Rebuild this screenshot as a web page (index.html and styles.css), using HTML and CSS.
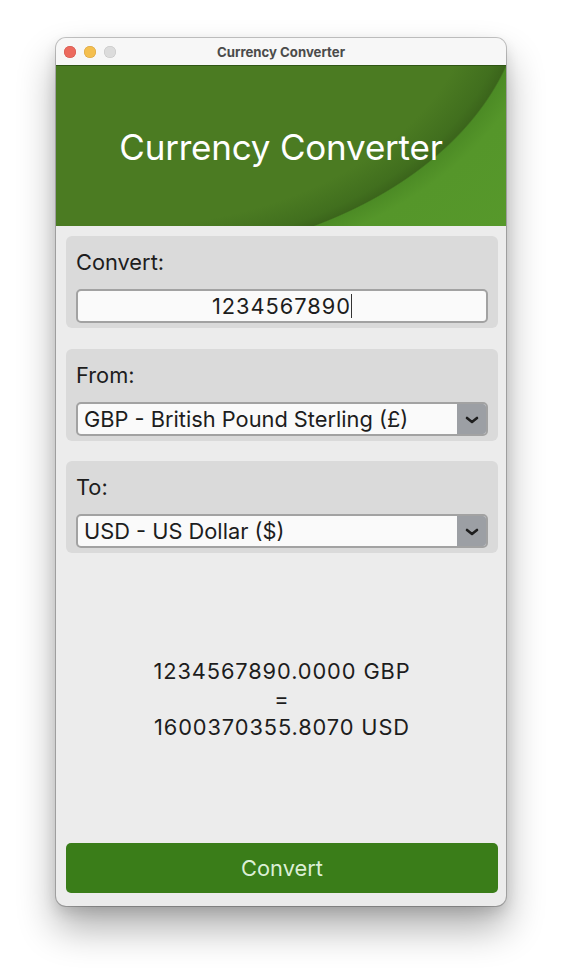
FILE: index.html
```html
<!DOCTYPE html>
<html lang="en">
<head>
<meta charset="utf-8">
<title>Currency Converter</title>
<link rel="stylesheet" href="styles.css">
</head>
<body>
<div class="window">
  <div class="titlebar">
    <div class="lights">
      <span class="light red"></span>
      <span class="light yellow"></span>
      <span class="light gray"></span>
    </div>
    <div class="wtitle">Currency Converter</div>
  </div>
  <div class="header">
    <h1 class="htitle">Currency Converter</h1>
  </div>
  <div class="content">
    <div class="group">
      <div class="label">Convert:</div>
      <div class="input"><span class="value">1234567890</span><span class="caret"></span></div>
    </div>
    <div class="group">
      <div class="label">From:</div>
      <div class="select">
        <span class="sel-text">GBP - British Pound Sterling (£)</span>
        <span class="sel-btn"><svg width="14" height="10" viewBox="0 0 14 10"><path d="M2 3 L7 7 L12 3" fill="none" stroke="#1e1e1e" stroke-width="2.6" stroke-linecap="round" stroke-linejoin="round"/></svg></span>
      </div>
    </div>
    <div class="group">
      <div class="label">To:</div>
      <div class="select">
        <span class="sel-text">USD - US Dollar ($)</span>
        <span class="sel-btn"><svg width="14" height="10" viewBox="0 0 14 10"><path d="M2 3 L7 7 L12 3" fill="none" stroke="#1e1e1e" stroke-width="2.6" stroke-linecap="round" stroke-linejoin="round"/></svg></span>
      </div>
    </div>
    <div class="result">
      <div>1234567890.0000 GBP</div>
      <div>=</div>
      <div>1600370355.8070 USD</div>
    </div>
    <button class="convert">Convert</button>
  </div>
</div>
</body>
</html>
```
FILE: styles.css
```css
* { box-sizing: border-box; }
html, body { margin: 0; padding: 0; }
body {
  background: #ffffff;
  width: 562px;
  height: 980px;
  font-family: Inter, "Liberation Sans", sans-serif;
  color: #1d1d1d;
  padding-top: 38px;
  padding-left: 56px;
}
.window {
  width: 450px;
  height: 868px;
  border-radius: 10px;
  overflow: hidden;
  display: flex;
  flex-direction: column;
  background: #ececec;
  box-shadow: 0 0 0 1px rgba(0,0,0,0.22), 0 22px 38px rgba(0,0,0,0.32), 0 6px 14px rgba(0,0,0,0.12);
}
.titlebar {
  height: 28px;
  flex: none;
  background: #f7f7f7;
  display: flex;
  align-items: center;
  position: relative;
  border-bottom: 1px solid #2f5514;
}
.lights {
  display: flex;
  gap: 8px;
  padding-left: 8px;
}
.light {
  width: 12px;
  height: 12px;
  border-radius: 50%;
}
.red { background: #ec6a5e; box-shadow: inset 0 0 0 0.5px #d0534a; }
.yellow { background: #f4bf4f; box-shadow: inset 0 0 0 0.5px #d6a13e; }
.gray { background: #dcdcdc; box-shadow: inset 0 0 0 0.5px #c4c4c4; }
.wtitle {
  position: absolute;
  left: 0; right: 0; top: 0; bottom: 0;
  display: flex;
  align-items: center;
  justify-content: center;
  font-size: 13.2px;
  font-weight: 700;
  color: #4b4b4b;
  pointer-events: none;
}
.header {
  height: 160px;
  flex: none;
  display: flex;
  align-items: center;
  justify-content: center;
  background:
    radial-gradient(ellipse 407px 274px at 60px -80px, #4b7b22 0%, #4b7b22 88%, #416f1e 97%, #3b651b 100%, #4c8b25 100.4%, #55962a 106%, #57992b 140%);
}
.htitle {
  margin: 0;
  font-weight: 400;
  font-size: 35px;
  color: #ffffff;
  letter-spacing: -0.2px;
  padding-top: 2px;
}
.content {
  flex: 1;
  display: flex;
  flex-direction: column;
  padding: 10px 8px 13px 10px;
}
.group {
  background: #dadada;
  border-radius: 6px;
  height: 92px;
  padding: 14px 10px 5px 10px;
  display: flex;
  flex-direction: column;
}
.group + .group { margin-top: 21px; }
.group:nth-child(3) { margin-top: 20px; }
.label {
  font-size: 21.8px;
  line-height: 24px;
  height: 24px;
  color: #1d1d1d;
}
.input {
  margin-top: 15px;
  height: 34px;
  background: #fafafa;
  border: 2px solid #a2a2a2;
  border-radius: 5px;
  display: flex;
  align-items: center;
  justify-content: center;
  font-size: 21.8px;
  letter-spacing: 1px;
  color: #1d1d1d;
}
.caret {
  width: 1px;
  height: 24px;
  background: #333;
}
.select {
  margin-top: 15px;
  height: 34px;
  border: 2px solid #a2a2a2;
  border-radius: 5px;
  display: flex;
  overflow: hidden;
  background: #fafafa;
}
.sel-text {
  flex: 1;
  display: flex;
  align-items: center;
  padding-left: 6px;
  font-size: 21.8px;
  color: #1d1d1d;
}
.sel-btn {
  width: 29px;
  flex: none;
  background: #9c9fa4;
  display: flex;
  align-items: center;
  justify-content: center;
  padding-top: 1px;
}
.result {
  flex: 1;
  display: flex;
  flex-direction: column;
  align-items: center;
  justify-content: center;
  font-size: 21.8px;
  letter-spacing: 0.9px;
  line-height: 28px;
  color: #1d1d1d;
  padding-top: 2px;
}
.convert {
  height: 50px;
  flex: none;
  border: none;
  border-radius: 5px;
  background: #3a7d19;
  color: #dcefd6;
  font-family: Inter, "Liberation Sans", sans-serif;
  font-size: 21.8px;
  width: 100%;
}
```
